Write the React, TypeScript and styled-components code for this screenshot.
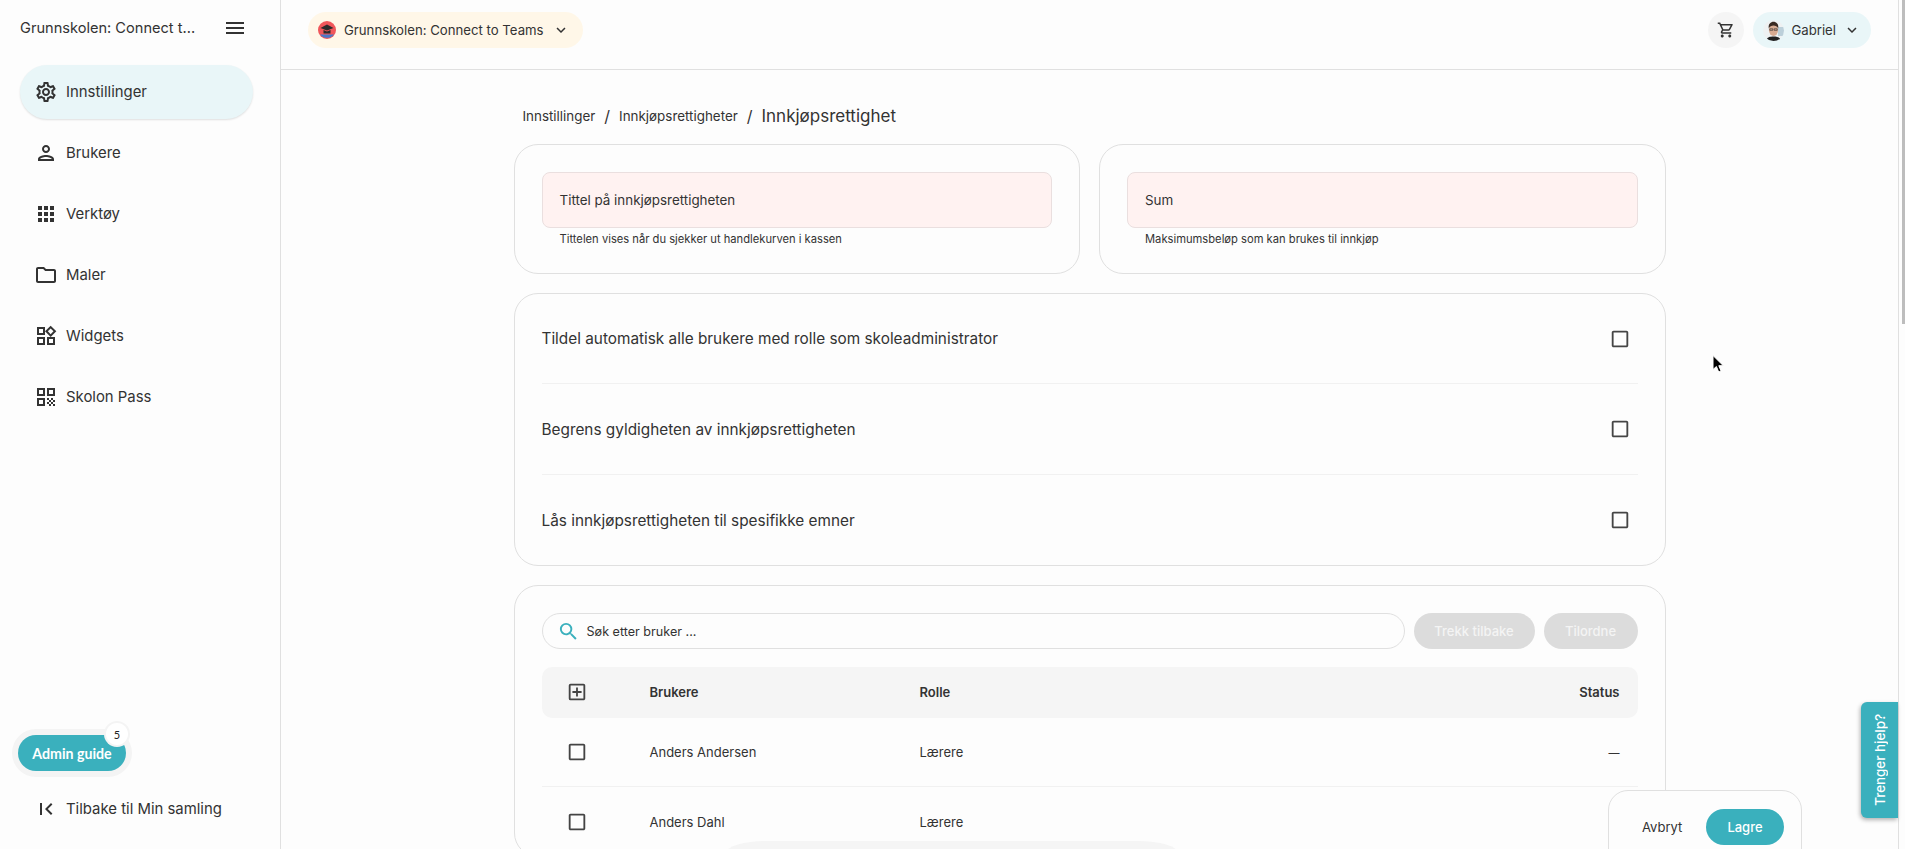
import React from "react";
import styled, { createGlobalStyle } from "styled-components";
import {
  MdApps,
  MdCheckBoxOutlineBlank,
  MdFirstPage,
  MdKeyboardArrowDown,
  MdMenu,
  MdOutlineAddBox,
  MdOutlineFolder,
  MdOutlinePerson,
  MdOutlineQrCode,
  MdOutlineSettings,
  MdOutlineShoppingCart,
  MdOutlineWidgets,
  MdSearch,
} from "react-icons/md";

const teal = "#3ab0bd";
const ink = "#333333";
const line = "#e0e0e0";
const page = "#fdfdfd";

const GlobalStyle = createGlobalStyle`
  html, body {
    margin: 0;
    height: 100%;
    overflow: hidden;
    background: ${page};
    color: ${ink};
    font-family: Inter, "Open Sans", sans-serif;
  }
`;

const Shell = styled.div`
  position: relative;
  display: grid;
  grid-template-columns: 281px 1fr 7px;
  grid-template-rows: 849px;
  height: 849px;
  overflow: hidden;
`;

const Sidebar = styled.aside`
  display: flex;
  flex-direction: column;
  border-right: 1px solid ${line};
  padding-bottom: 13px;
  box-sizing: border-box;
`;

const SideHead = styled.div`
  display: flex;
  align-items: center;
  justify-content: space-between;
  height: 56px;
  padding: 0 33px 0 20px;
  margin-bottom: 9px;
  font-size: 14.6px;
  svg {
    font-size: 24px;
  }
`;

const NavList = styled.nav`
  display: flex;
  flex-direction: column;
  gap: 7px;
`;

const NavItem = styled.a<{ $active?: boolean }>`
  display: flex;
  align-items: center;
  gap: 8px;
  height: 54px;
  width: 233px;
  margin-left: 20px;
  padding-left: 14px;
  box-sizing: border-box;
  border-radius: 27px;
  font-size: 14.9px;
  color: ${ink};
  background: ${(p) => (p.$active ? "#e9f6f8" : "transparent")};
  box-shadow: ${(p) => (p.$active ? "0 1px 2px rgba(0,0,0,0.12)" : "none")};
  svg {
    font-size: 24px;
    flex: none;
  }
`;

const SideFoot = styled.div`
  margin-top: auto;
  display: flex;
  flex-direction: column;
  gap: 11px;
`;

const GuideButton = styled.button`
  position: relative;
  align-self: flex-start;
  margin-left: 18px;
  width: 108px;
  height: 36px;
  padding: 0;
  border: 0;
  border-radius: 18px;
  background: ${teal};
  box-shadow: 0 0 0 6px #f4f4f4;
  color: #fff;
  font: 700 14.2px "Lato", sans-serif;
`;

const GuideBadge = styled.span`
  position: absolute;
  top: -12px;
  right: -2px;
  width: 22px;
  height: 22px;
  display: flex;
  align-items: center;
  justify-content: center;
  border-radius: 50%;
  background: #fff;
  box-shadow: 0 0 0 2px #f4f4f4;
  color: #222;
  font: 400 11px "Lato", sans-serif;
`;

const Main = styled.main`
  display: flex;
  flex-direction: column;
  min-width: 0;
  min-height: 0;
`;

const Topbar = styled.header`
  flex: none;
  display: flex;
  align-items: flex-start;
  justify-content: space-between;
  height: 57px;
  padding: 12px 27px 0;
  border-bottom: 1px solid ${line};
`;

const Chip = styled.div<{ $bg: string; $right: number; $gap: number }>`
  display: flex;
  align-items: center;
  height: 36px;
  border-radius: 18px;
  background: ${(p) => p.$bg};
  font-size: 13.2px;
  padding: 0 ${(p) => p.$right}px 0 10px;
  gap: ${(p) => p.$gap}px;
  svg.chev {
    font-size: 18px;
  }
`;

const TopRight = styled.div`
  display: flex;
  align-items: center;
  gap: 9px;
`;

const CartButton = styled.div`
  width: 36px;
  height: 36px;
  border-radius: 50%;
  background: #f5f5f5;
  display: flex;
  align-items: center;
  justify-content: center;
  font-size: 18px;
`;

const Content = styled.div`
  flex: 1;
  min-height: 0;
  overflow: hidden;
`;

const Column = styled.div`
  width: 1152px;
  margin: 0 auto;
  display: flex;
  flex-direction: column;
  gap: 19px;
`;

const Crumbs = styled.div`
  display: flex;
  align-items: center;
  gap: 9px;
  height: 30px;
  margin: 31px 0 -6px 9px;
  font-size: 13.4px;
`;

const CrumbSlash = styled.span`
  font-size: 16px;
`;

const CrumbCurrent = styled.span`
  font-size: 17px;
`;

const TwoCards = styled.div`
  display: grid;
  grid-template-columns: 1fr 1fr;
  gap: 19px;
`;

const Card = styled.section`
  border: 1px solid ${line};
  border-radius: 24px;
  padding: 0 27px;
  box-sizing: border-box;
`;

const FieldCard = styled(Card)`
  height: 130px;
  padding-top: 27px;
`;

const ErrorInput = styled.div`
  height: 56px;
  box-sizing: border-box;
  display: flex;
  align-items: center;
  padding-left: 17px;
  border: 1px solid #eadfdf;
  border-radius: 8px;
  background: #fff2f1;
  font-size: 13.4px;
`;

const Helper = styled.div`
  margin: 3px 0 0 18px;
  font-size: 11.2px;
  line-height: 16px;
`;

const ToggleRow = styled.div`
  display: flex;
  align-items: center;
  justify-content: space-between;
  box-sizing: border-box;
  height: 91px;
  padding-right: 7px;
  font-size: 15.35px;
  &:first-child {
    height: 89px;
  }
  & + & {
    border-top: 1px solid #f1f1f1;
  }
`;

const Check = styled(MdCheckBoxOutlineBlank)`
  font-size: 22px;
  color: #444;
  flex: none;
`;

const UsersCard = styled(Card)`
  padding-top: 27px;
`;

const SearchRow = styled.div`
  display: flex;
  gap: 9px;
`;

const SearchBox = styled.div`
  flex: 1;
  display: flex;
  align-items: center;
  gap: 7px;
  height: 36px;
  box-sizing: border-box;
  padding-left: 14px;
  border: 1px solid ${line};
  border-radius: 18px;
  font-size: 12.6px;
  svg {
    font-size: 23px;
    color: ${teal};
  }
`;

const DisabledButton = styled.button<{ $w: number }>`
  width: ${(p) => p.$w}px;
  height: 36px;
  border: 0;
  border-radius: 18px;
  background: #dcdcdc;
  color: #f4f4f4;
  font: 500 13px Inter, sans-serif;
`;

const TableHead = styled.div`
  display: grid;
  grid-template-columns: 108px 270px 1fr 120px;
  align-items: center;
  box-sizing: border-box;
  height: 51px;
  margin-top: 18px;
  padding-bottom: 2px;
  border-radius: 10px;
  background: #f5f5f5;
  font-size: 13px;
  font-weight: 600;
`;

const TableRow = styled.div`
  display: grid;
  grid-template-columns: 108px 270px 1fr 120px;
  align-items: center;
  box-sizing: border-box;
  height: 68px;
  font-size: 13px;
  & + & {
    border-top: 1px solid #f1f1f1;
    height: 70px;
  }
`;

const CheckCell = styled.div`
  display: flex;
  padding-left: 24px;
  font-size: 22px;
  color: #444;
`;

const EndCell = styled.div`
  text-align: right;
  padding-right: 18px;
`;

const EmptyDash = styled.span`
  font-size: 11px;
`;

const Scrollbar = styled.div`
  border-left: 1px solid ${line};
  display: flex;
  justify-content: flex-end;
`;

const ScrollThumb = styled.div`
  width: 3px;
  height: 324px;
  background: #bdbdbd;
`;

const SaveBar = styled.div`
  position: absolute;
  left: 1608px;
  top: 790px;
  width: 194px;
  height: 80px;
  box-sizing: border-box;
  display: flex;
  align-items: flex-start;
  padding: 18px 17px 0 33px;
  justify-content: space-between;
  border: 1px solid ${line};
  border-radius: 20px;
  background: ${page};
  font-size: 13px;
`;

const CancelText = styled.span`
  line-height: 36px;
`;

const SaveButton = styled.button`
  width: 78px;
  height: 36px;
  border: 0;
  border-radius: 18px;
  background: ${teal};
  color: #fff;
  font: 500 13px Inter, sans-serif;
`;

const HelpTab = styled.div`
  position: absolute;
  left: 1861px;
  top: 702px;
  width: 37px;
  height: 116px;
  display: flex;
  align-items: center;
  justify-content: center;
  border-radius: 6px 0 0 6px;
  background: ${teal};
  box-shadow: -1px 2px 4px rgba(0, 0, 0, 0.3);
  color: #fff;
  font-size: 13.4px;
  font-weight: 500;
  span {
    writing-mode: vertical-rl;
    transform: rotate(180deg);
  }
`;

const BottomBlob = styled.div`
  position: absolute;
  left: 726px;
  top: 841px;
  width: 452px;
  height: 40px;
  border-radius: 40px / 12px;
  background: #f5f5f5;
`;

const Pointer = styled.svg`
  position: absolute;
  left: 1711px;
  top: 354px;
  width: 14px;
  height: 21px;
`;

const SchoolLogo = () => (
  <svg width="18" height="18" viewBox="0 0 18 18">
    <circle cx="9" cy="9" r="9" fill="#f0565a" />
    <path d="M2 13.5h14a9 9 0 0 1-14 0z" fill="#4a78c8" />
    <path d="M9 3.600 15.500 7 9 9.600 2.500 7z" fill="#2b2b2b" />
    <path d="M5.500 9v3.600h7V9L9 10.500z" fill="#2b2b2b" />
  </svg>
);

const Avatar = () => (
  <svg width="21" height="21" viewBox="0 0 21 21">
    <defs>
      <clipPath id="avatar-clip">
        <circle cx="10.5" cy="10.5" r="10.5" />
      </clipPath>
    </defs>
    <g clipPath="url(#avatar-clip)">
      <rect width="21" height="21" fill="#eef1f2" />
      <rect x="15" y="7" width="6" height="9" fill="#bcd0da" />
      <path d="M3 21c1-4 4-4.500 7.500-4.500s6.500.5 7.500 4.500z" fill="#222" />
      <ellipse cx="10.500" cy="10" rx="4.600" ry="6" fill="#d8ab92" />
      <path d="M5.800 8.500C5 4 7.800 1.800 10.500 1.800S16 4 15.200 8.500c-1-2.300-2.600-3-4.700-3s-3.700.7-4.700 3z" fill="#3a2a22" />
      <path d="M6.800 8.800h3v1.500h-3zM11.200 8.800h3v1.500h-3z" fill="none" stroke="#2b2b2b" strokeWidth=".6" />
    </g>
  </svg>
);

const navItems = [
  { label: "Innstillinger", icon: <MdOutlineSettings />, active: true },
  { label: "Brukere", icon: <MdOutlinePerson /> },
  { label: "Verktøy", icon: <MdApps /> },
  { label: "Maler", icon: <MdOutlineFolder /> },
  { label: "Widgets", icon: <MdOutlineWidgets /> },
  { label: "Skolon Pass", icon: <MdOutlineQrCode /> },
];

const toggles = [
  "Tildel automatisk alle brukere med rolle som skoleadministrator",
  "Begrens gyldigheten av innkjøpsrettigheten",
  "Lås innkjøpsrettigheten til spesifikke emner",
];

const users = ["Anders Andersen", "Anders Dahl"];

export default function App() {
  return (
    <Shell>
      <GlobalStyle />
      <Sidebar>
        <SideHead>
          <span>Grunnskolen: Connect t...</span>
          <MdMenu />
        </SideHead>
        <NavList>
          {navItems.map((item) => (
            <NavItem key={item.label} $active={item.active}>
              {item.icon}
              {item.label}
            </NavItem>
          ))}
        </NavList>
        <SideFoot>
          <GuideButton>
            Admin guide
            <GuideBadge>5</GuideBadge>
          </GuideButton>
          <NavItem>
            <MdFirstPage />
            Tilbake til Min samling
          </NavItem>
        </SideFoot>
      </Sidebar>

      <Main>
        <Topbar>
          <Chip $bg="#fff7e8" $right={13} $gap={8}>
            <SchoolLogo />
            Grunnskolen: Connect to Teams
            <MdKeyboardArrowDown className="chev" />
          </Chip>
          <TopRight>
            <CartButton>
              <MdOutlineShoppingCart />
            </CartButton>
            <Chip $bg="#e9f6f8" $right={10} $gap={7}>
              <Avatar />
              Gabriel
              <MdKeyboardArrowDown className="chev" />
            </Chip>
          </TopRight>
        </Topbar>
        <Content>
          <Column>
            <Crumbs>
              <span>Innstillinger</span>
              <CrumbSlash>/</CrumbSlash>
              <span>Innkjøpsrettigheter</span>
              <CrumbSlash>/</CrumbSlash>
              <CrumbCurrent>Innkjøpsrettighet</CrumbCurrent>
            </Crumbs>
            <TwoCards>
              <FieldCard>
                <ErrorInput>Tittel på innkjøpsrettigheten</ErrorInput>
                <Helper>Tittelen vises når du sjekker ut handlekurven i kassen</Helper>
              </FieldCard>
              <FieldCard>
                <ErrorInput>Sum</ErrorInput>
                <Helper>Maksimumsbeløp som kan brukes til innkjøp</Helper>
              </FieldCard>
            </TwoCards>
            <Card>
              {toggles.map((label) => (
                <ToggleRow key={label}>
                  {label}
                  <Check />
                </ToggleRow>
              ))}
            </Card>
            <UsersCard>
              <SearchRow>
                <SearchBox>
                  <MdSearch />
                  Søk etter bruker ...
                </SearchBox>
                <DisabledButton $w={121}>Trekk tilbake</DisabledButton>
                <DisabledButton $w={94}>Tilordne</DisabledButton>
              </SearchRow>
              <TableHead>
                <CheckCell>
                  <MdOutlineAddBox />
                </CheckCell>
                <div>Brukere</div>
                <div>Rolle</div>
                <EndCell>Status</EndCell>
              </TableHead>
              {users.map((name, i) => (
                <TableRow key={name}>
                  <CheckCell>
                    <MdCheckBoxOutlineBlank />
                  </CheckCell>
                  <div>{name}</div>
                  <div>Lærere</div>
                  <EndCell>{i === 0 && <EmptyDash>—</EmptyDash>}</EndCell>
                </TableRow>
              ))}
            </UsersCard>
          </Column>
        </Content>
      </Main>

      <Scrollbar>
        <ScrollThumb />
      </Scrollbar>

      <BottomBlob />
      <SaveBar>
        <CancelText>Avbryt</CancelText>
        <SaveButton>Lagre</SaveButton>
      </SaveBar>
      <HelpTab>
        <span>Trenger hjelp?</span>
      </HelpTab>
      <Pointer viewBox="0 0 14 21">
        <path d="M2 1.500v14l3.400-3 2.300 5.500 2.400-1-2.300-5.300h4.500z" fill="#000" stroke="#fff" strokeWidth="1" />
      </Pointer>
    </Shell>
  );
}
